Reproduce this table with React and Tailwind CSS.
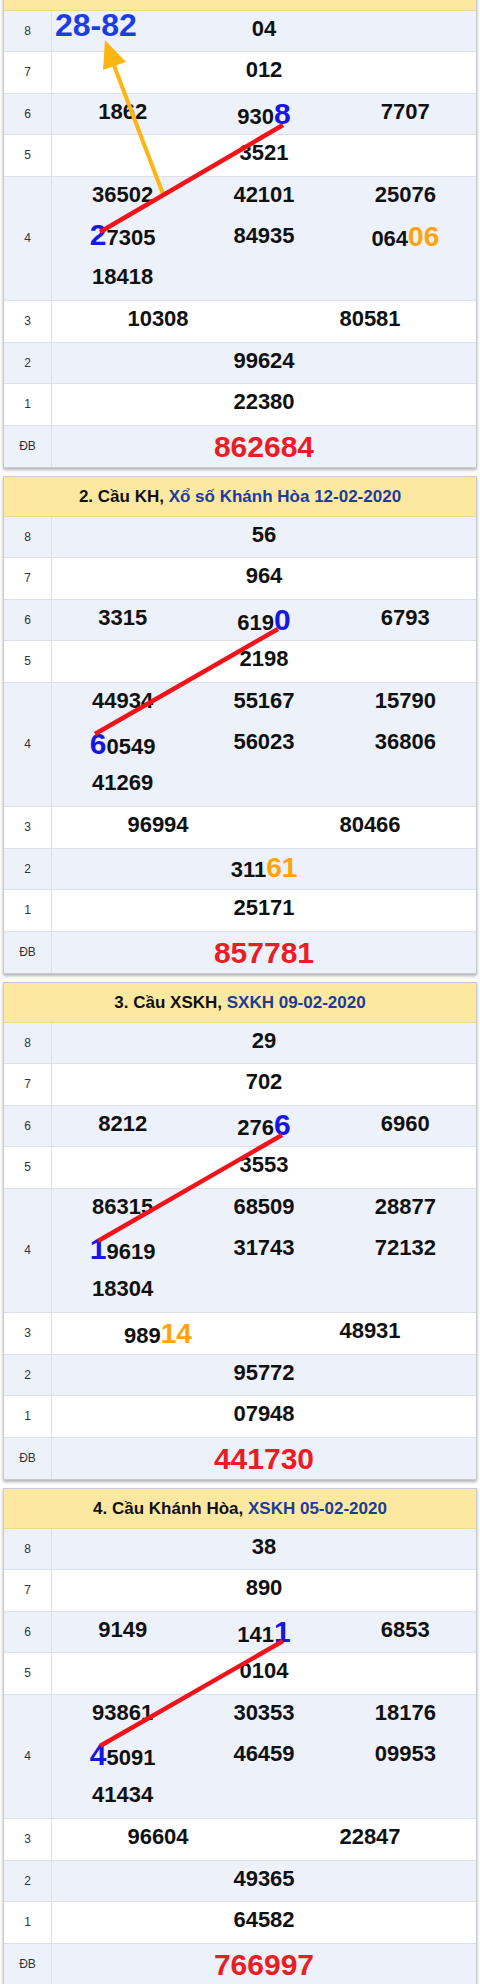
const NUM = 'text-[22px] font-bold text-[#111]';

const HI = {
    b: "text-[30px] leading-none font-bold text-[#1616e6] font-['Liberation_Sans_Narrow','Liberation_Sans',Arial,sans-serif]",
    o: 'text-[28px] leading-none font-bold text-[#ffa20c]',
};

const cards = [
    {
        title: null,
        g8: '04',
        g7: '012',
        g6: ['1862', { pre: '930', hi: '8', c: 'b', pad: 'pt-[3.5px]' }, '7707'],
        g5: '3521',
        g4: [
            ['36502', { hi: '2', post: '7305', c: 'b', pad: 'pb-[1.5px]' }, '18418'],
            ['42101', '84935'],
            ['25076', { pre: '064', hi: '06', c: 'o', pad: '' }],
        ],
        g3: ['10308', '80581'],
        g2: '99624',
        g1: '22380',
        db: '862684',
        arrow: true,
        line: [96, 221, 279, 114],
    },
    {
        title: ['2. Cầu KH,', 'Xổ số Khánh Hòa 12-02-2020'],
        g8: '56',
        g7: '964',
        g6: ['3315', { pre: '619', hi: '0', c: 'b', pad: 'pt-[3.5px]' }, '6793'],
        g5: '2198',
        g4: [
            ['44934', { hi: '6', post: '0549', c: 'b', pad: 'pt-[3.5px]' }, '41269'],
            ['55167', '56023'],
            ['15790', '36806'],
        ],
        g3: ['96994', '80466'],
        g2: { pre: '311', hi: '61', c: 'o', pad: 'pt-[2px]' },
        g1: '25171',
        db: '857781',
        line: [91, 217, 274, 112],
    },
    {
        title: ['3. Cầu XSKH,', 'SXKH 09-02-2020'],
        g8: '29',
        g7: '702',
        g6: ['8212', { pre: '276', hi: '6', c: 'b', pad: 'pt-[1.5px]' }, '6960'],
        g5: '3553',
        g4: [
            ['86315', { hi: '1', post: '9619', c: 'b', pad: 'pt-[2.5px]' }, '18304'],
            ['68509', '31743'],
            ['28877', '72132'],
        ],
        g3: [{ pre: '989', hi: '14', c: 'o', pad: 'pt-[4px]' }, '48931'],
        g2: '95772',
        g1: '07948',
        db: '441730',
        line: [94, 218, 278, 112],
    },
    {
        title: ['4. Cầu Khánh Hòa,', 'XSKH 05-02-2020'],
        g8: '38',
        g7: '890',
        g6: ['9149', { pre: '141', hi: '1', c: 'b', pad: 'pt-[3.5px]' }, '6853'],
        g5: '0104',
        g4: [
            ['93861', { hi: '4', post: '5091', c: 'b', pad: 'pt-[2.5px]' }, '41434'],
            ['30353', '46459'],
            ['18176', '09953'],
        ],
        g3: ['96604', '22847'],
        g2: '49365',
        g1: '64582',
        db: '766997',
        line: [96, 217, 279, 112],
    },
];

function Num({ v }) {
    if (typeof v === 'string') {
        return <div className={`flex h-full items-center justify-center pb-[5px] ${NUM}`}>{v}</div>;
    }
    return (
        <div className={`flex h-full items-center justify-center ${v.pad} ${NUM}`}>
            <span>
                {v.pre}
                <span className={HI[v.c]}>{v.hi}</span>
                {v.post}
            </span>
        </div>
    );
}

function Row({ label, blue, tall, last, children }) {
    return (
        <div
            className={`flex ${tall ? 'h-[124.5px]' : 'h-[41.5px]'} ${blue ? 'bg-[#edf1f9]' : 'bg-white'} ${
                last ? '' : 'border-b border-[#dce1e9]'
            }`}
        >
            <div className="flex w-[48px] shrink-0 items-center justify-center border-r border-[#dce1e9] text-[12px] text-[#333]">
                {label}
            </div>
            <div className="min-w-0 flex-1">{children}</div>
        </div>
    );
}

function Card({ d, first }) {
    const [x1, y1, x2, y2] = d.line;
    return (
        <section
            className={`border border-[#c6cad1] bg-white shadow-[0_2px_3px_rgba(0,0,0,0.3)] ${first ? '-mt-[30px]' : ''}`}
        >
            {/* Title bar */}
            <div className="flex h-[39.5px] items-center justify-center border-b border-[#eed98f] bg-[#fde8a2] text-[17px] font-bold">
                {d.title && (
                    <span>
                        <span className="text-[#111]">{d.title[0]}</span>{' '}
                        <span className="text-[#1b3d98]">{d.title[1]}</span>
                    </span>
                )}
            </div>

            {/* Prize table */}
            <div className="relative">
                <Row label="8" blue>
                    <Num v={d.g8} />
                </Row>
                <Row label="7">
                    <Num v={d.g7} />
                </Row>
                <Row label="6" blue>
                    <div className="grid h-full grid-cols-3">
                        {d.g6.map((v, i) => (
                            <Num key={i} v={v} />
                        ))}
                    </div>
                </Row>
                <Row label="5">
                    <Num v={d.g5} />
                </Row>
                <Row label="4" blue tall>
                    <div className="grid h-full grid-cols-3">
                        {d.g4.map((col, i) => (
                            <div key={i} className="flex flex-col">
                                {col.map((v, j) => (
                                    <div key={j} className="h-[41.17px]">
                                        <Num v={v} />
                                    </div>
                                ))}
                            </div>
                        ))}
                    </div>
                </Row>
                <Row label="3">
                    <div className="grid h-full grid-cols-2">
                        {d.g3.map((v, i) => (
                            <Num key={i} v={v} />
                        ))}
                    </div>
                </Row>
                <Row label="2" blue>
                    <Num v={d.g2} />
                </Row>
                <Row label="1">
                    <Num v={d.g1} />
                </Row>
                <Row label="ĐB" blue last>
                    <div className="flex h-full items-center justify-center text-[30px] font-bold text-[#ea1c24]">
                        {d.db}
                    </div>
                </Row>

                {/* Cầu overlay */}
                <svg className="pointer-events-none absolute inset-0 h-full w-full overflow-visible">
                    {d.arrow && (
                        <>
                            <line x1="159" y1="183" x2="106" y2="44" stroke="#ffb511" strokeWidth="4" />
                            <polygon points="101,29 122,51 99,59" fill="#ffb511" />
                        </>
                    )}
                    <line x1={x1} y1={y1} x2={x2} y2={y2} stroke="#f2131a" strokeWidth="4.5" />
                </svg>
                {d.arrow && (
                    <div className="absolute left-[51px] top-0 text-[32px] font-bold leading-[28px] text-[#1b3ee4]">28-82</div>
                )}
            </div>
        </section>
    );
}

export default function App() {
    return (
        <div className="flex h-[1984px] flex-col gap-[8px] overflow-hidden bg-white px-[3px] font-['Liberation_Sans',Arial,sans-serif]">
            {cards.map((d, i) => (
                <Card key={i} d={d} first={i === 0} />
            ))}
        </div>
    );
}
